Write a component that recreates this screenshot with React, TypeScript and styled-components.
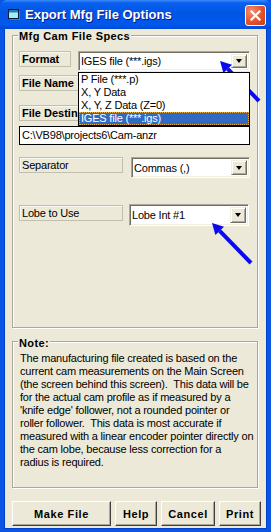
import styled, { createGlobalStyle } from "styled-components";

const GlobalStyle = createGlobalStyle`
  html, body {
    margin: 0;
    padding: 0;
    background: #ffffff;
  }
  body {
    font-family: "Liberation Sans", Arial, sans-serif;
    font-size: 11px;
  }
`;

const formatOptions = [
  "P File (***.p)",
  "X, Y Data",
  "X, Y, Z Data (Z=0)",
  "IGES file (***.igs)",
];

const noteLines = [
  "The manufacturing file created is based on the",
  "current cam measurements on the Main Screen",
  "(the screen behind this screen).  This data will be",
  "for the actual cam profile as if measured by a",
  "'knife edge' follower, not a rounded pointer or",
  "roller follower.  This data is most accurate if",
  "measured with a linear encoder pointer directly on",
  "the cam lobe, because less correction for a",
  "radius is required.",
];

const buttons = [
  { title: "Make File", width: 99 },
  { title: "Help", width: 42 },
  { title: "Cancel", width: 54 },
  { title: "Print", width: 42 },
];

const AppIcon = () => (
  <svg width="14" height="13" viewBox="0 0 14 13">
    <rect x="1.5" y="1.5" width="10" height="9" fill="#9ff0f4" stroke="#0b1a3a" />
    <rect x="2" y="2" width="9" height="2.5" fill="#2a7fa0" />
    <path d="M12 3 L13 3 L13 12 L3 12 L3 11 L12 11 Z" fill="#c08040" opacity="0.6" />
  </svg>
);

const CloseIcon = () => (
  <svg width="11" height="11" viewBox="0 0 11 11">
    <path d="M1.5 1.5 L9.5 9.5 M9.5 1.5 L1.5 9.5" stroke="#ffffff" strokeWidth="2.2" strokeLinecap="square" />
  </svg>
);

// blue annotation arrows painted over the dialog
const Arrows = () => (
  <Overlay width="271" height="532" viewBox="0 0 271 532">
    <line x1="259" y1="101" x2="227.7" y2="68.9" stroke="#0a0af0" strokeWidth="4" />
    <polygon points="220,61 232,64.7 223.4,73.1" fill="#0a0af0" />
    <line x1="251" y1="263" x2="219.7" y2="230.9" stroke="#0a0af0" strokeWidth="4" />
    <polygon points="212,223 224,226.7 215.4,235.1" fill="#0a0af0" />
  </Overlay>
);

export default function App() {
  return (
    <>
      <GlobalStyle />
      <Window>
        <TitleBar>
          <AppIcon />
          <Title>Export Mfg File Options</Title>
          <CloseButton>
            <CloseIcon />
          </CloseButton>
        </TitleBar>
        <Client>
          <Group $height={293} $padTop={15}>
            <Caption $top={-6}>Mfg Cam File Specs</Caption>
            <Row>
              <LabelBox $width={52} $bold>Format</LabelBox>
              <Combo $width={172} $height={20} $ml={7}>
                <ComboText>IGES file (***.igs)</ComboText>
                <DropButton />
                <DropList>
                  {formatOptions.map((item, index) => (
                    <DropItem key={index} $selected={index === formatOptions.length - 1}>
                      {item}
                    </DropItem>
                  ))}
                </DropList>
              </Combo>
            </Row>
            <Row $mt={4}>
              <LabelBox $width={60} $bold>File Name</LabelBox>
            </Row>
            <Row $mt={14}>
              <LabelBox $width={60} $bold>File Destin</LabelBox>
            </Row>
            <PathBox>C:\VB98\projects6\Cam-anzr</PathBox>
            <Row $mt={12}>
              <LabelBox $width={104}>Separator</LabelBox>
              <Combo $width={119} $height={21} $ml={8}>
                <ComboText>Commas (,)</ComboText>
                <DropButton />
              </Combo>
            </Row>
            <Row $mt={26}>
              <LabelBox $width={104} $mt={1}>Lobe to Use</LabelBox>
              <Combo $width={120} $height={22} $ml={6}>
                <ComboText>Lobe Int #1</ComboText>
                <DropButton />
              </Combo>
            </Row>
          </Group>
          <Group $height={147} $padTop={10}>
            <Caption $top={-5}>Note:</Caption>
            <NoteText>
              {noteLines.map((line, index) => (
                <NoteLine key={index}>{line}</NoteLine>
              ))}
            </NoteText>
          </Group>
          <ButtonRow>
            {buttons.map((item) => (
              <Button key={item.title} $width={item.width}>
                {item.title}
              </Button>
            ))}
          </ButtonRow>
        </Client>
        <Arrows />
      </Window>
    </>
  );
}

const Window = styled.div`
  position: relative;
  width: 271px;
  height: 532px;
  box-sizing: border-box;
  display: flex;
  flex-direction: column;
  background: #0a55e6;
  padding: 0 4px 3px 4px;
  overflow: hidden;
`;

const TitleBar = styled.div`
  display: flex;
  align-items: center;
  height: 29px;
  margin: 0 -4px;
  padding: 0 5px 0 7px;
  background: linear-gradient(
    to bottom,
    #3d8cff 0%,
    #0a60ee 10%,
    #0055e5 45%,
    #0058ec 85%,
    #0048d6 100%
  );
  border-radius: 7px 7px 0 0;
  flex-shrink: 0;
`;

const Title = styled.span`
  flex: 1;
  margin-left: 4px;
  color: #ffffff;
  font-family: "Liberation Sans", Arial, sans-serif;
  font-weight: 700;
  font-size: 13px;
  line-height: 16px;
  text-shadow: 1px 1px 0 #0a1a80;
`;

const CloseButton = styled.div`
  width: 21px;
  height: 21px;
  margin-top: 2px;
  box-sizing: border-box;
  border: 1px solid #ffffff;
  border-radius: 3px;
  background: radial-gradient(circle at 30% 30%, #f0917a 0%, #e1532f 55%, #c43c1a 100%);
  display: flex;
  align-items: center;
  justify-content: center;
`;

const Client = styled.div`
  flex: 1;
  display: flex;
  flex-direction: column;
  gap: 13px;
  background: #ece9d8;
  padding: 6px 0 0 8px;
  box-shadow: inset 1px 0 0 #0040c8, inset -1px 0 0 #0040c8, inset 0 -1px 0 #0040c8;
`;

const Group = styled.div<{ $height: number; $padTop: number }>`
  position: relative;
  width: 246px;
  height: ${(props) => props.$height}px;
  box-sizing: border-box;
  border: 1px solid #aca899;
  box-shadow: 1px 1px 0 #ffffff, inset 1px 1px 0 #ffffff;
  padding: ${(props) => props.$padTop}px 0 0 6px;
  display: flex;
  flex-direction: column;
  flex-shrink: 0;
`;

const Caption = styled.span<{ $top: number }>`
  position: absolute;
  left: 5px;
  top: ${(props) => props.$top}px;
  padding: 0 1px;
  background: #ece9d8;
  font-weight: 700;
  font-size: 11px;
  line-height: 13px;
  letter-spacing: 0.4px;
  color: #000000;
`;

const Row = styled.div<{ $mt?: number }>`
  display: flex;
  align-items: flex-start;
  margin-top: ${(props) => props.$mt ?? 0}px;
`;

const LabelBox = styled.div<{ $width: number; $bold?: boolean; $mt?: number }>`
  width: ${(props) => props.$width}px;
  height: 16px;
  margin-top: ${(props) => props.$mt ?? 0}px;
  box-sizing: border-box;
  border: 1px solid #c3bfad;
  box-shadow: inset 1px 1px 0 #f7f6ef;
  padding-left: 2px;
  font-size: 11px;
  line-height: 14px;
  font-weight: ${(props) => (props.$bold ? 700 : 400)};
  letter-spacing: ${(props) => (props.$bold ? "0" : "-0.2px")};
  white-space: nowrap;
  overflow: hidden;
  color: #000000;
`;

const Combo = styled.div<{ $width: number; $height: number; $ml: number }>`
  position: relative;
  width: ${(props) => props.$width}px;
  height: ${(props) => props.$height}px;
  margin-left: ${(props) => props.$ml}px;
  box-sizing: border-box;
  display: flex;
  align-items: center;
  background: #ffffff;
  border: 1px solid;
  border-color: #aca899 #ffffff #ffffff #aca899;
  box-shadow: inset 1px 1px 0 #716f64, inset -1px -1px 0 #f1efe2;
`;

const ComboText = styled.span`
  flex: 1;
  padding-left: 2px;
  font-size: 11px;
  letter-spacing: -0.2px;
  white-space: nowrap;
  color: #000000;
`;

const DropButton = styled.div`
  align-self: stretch;
  width: 16px;
  margin: 2px 2px 2px 0;
  box-sizing: border-box;
  background: #ece9d8;
  border: 1px solid;
  border-color: #f1efe2 #716f64 #716f64 #f1efe2;
  box-shadow: inset 1px 1px 0 #ffffff, inset -1px -1px 0 #aca899;
  display: flex;
  align-items: center;
  justify-content: center;

  &::after {
    content: "";
    border-left: 3.5px solid transparent;
    border-right: 3.5px solid transparent;
    border-top: 4px solid #000000;
  }
`;

const DropList = styled.div`
  position: absolute;
  left: -1px;
  top: 20px;
  width: 172px;
  box-sizing: border-box;
  border: 1px solid #000000;
  background: #ffffff;
  z-index: 2;
`;

const DropItem = styled.div<{ $selected?: boolean }>`
  height: 13px;
  line-height: 13px;
  padding-left: 2px;
  font-size: 11px;
  letter-spacing: -0.2px;
  white-space: nowrap;
  background: ${(props) => (props.$selected ? "#316ac5" : "transparent")};
  color: ${(props) => (props.$selected ? "#ffffff" : "#000000")};
  outline: ${(props) => (props.$selected ? "1px dotted #e8b040" : "none")};
  outline-offset: -1px;
`;

const PathBox = styled.div`
  width: 231px;
  height: 19px;
  margin-top: 5px;
  box-sizing: border-box;
  border: 1px solid #000000;
  background: #ffffff;
  padding-left: 2px;
  font-size: 11px;
  line-height: 17px;
  letter-spacing: -0.2px;
  white-space: nowrap;
  color: #000000;
`;

const NoteText = styled.div`
  padding-left: 1px;
  display: flex;
  flex-direction: column;
`;

const NoteLine = styled.span`
  font-size: 11px;
  line-height: 13px;
  letter-spacing: -0.2px;
  white-space: pre;
  color: #000000;
`;

const ButtonRow = styled.div`
  display: flex;
  gap: 4px;
`;

const Button = styled.div<{ $width: number }>`
  width: ${(props) => props.$width}px;
  height: 25px;
  box-sizing: border-box;
  background: #ece9d8;
  border: 1px solid;
  border-color: #ffffff #404040 #404040 #ffffff;
  box-shadow: inset -1px -1px 0 #aca899;
  display: flex;
  align-items: center;
  justify-content: center;
  font-weight: 700;
  font-size: 11px;
  letter-spacing: 0.6px;
  color: #000000;
`;

const Overlay = styled.svg`
  position: absolute;
  left: 0;
  top: 0;
  pointer-events: none;
`;
